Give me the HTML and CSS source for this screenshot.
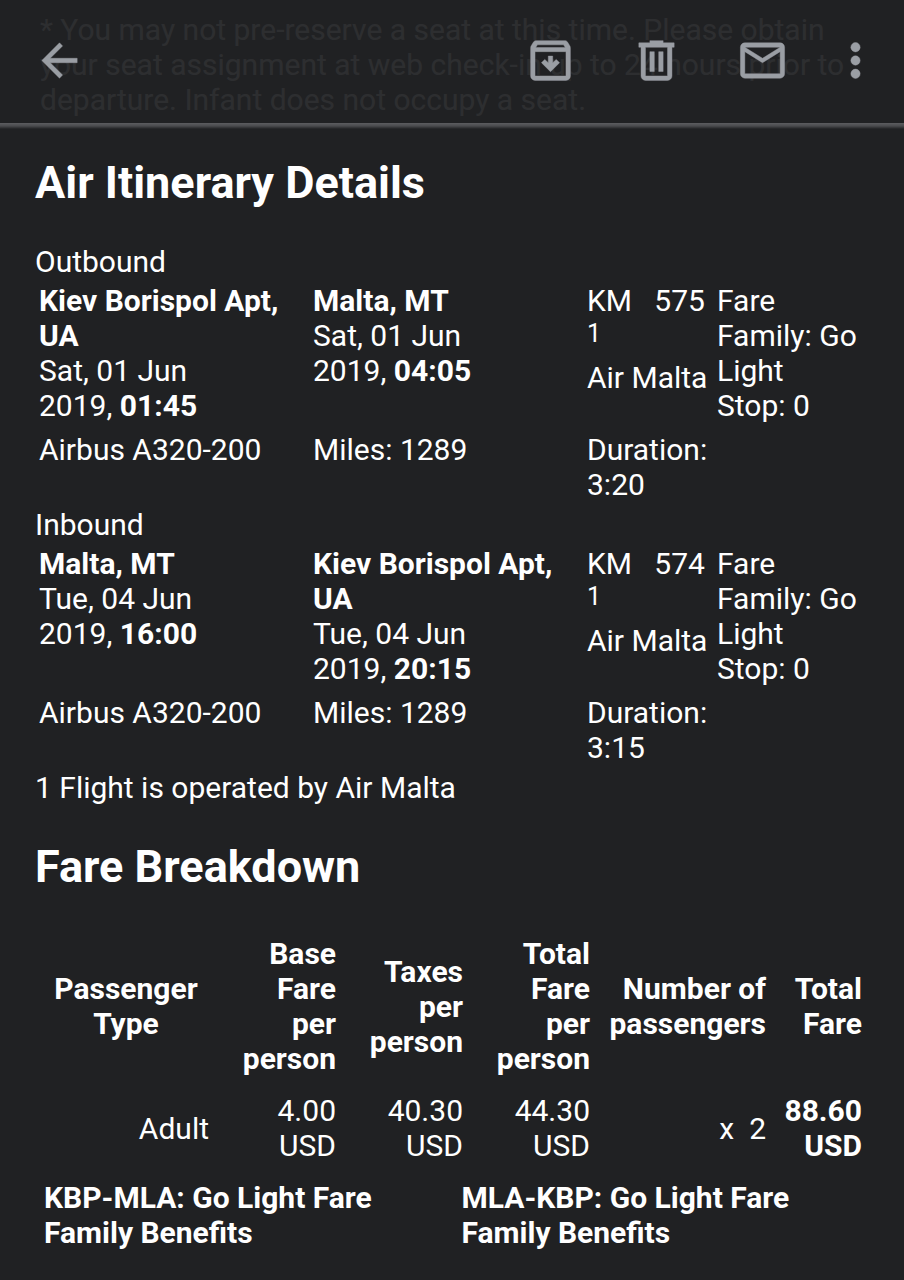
FILE: index.html
```html
<!DOCTYPE html>
<html lang="en">
<head>
    <meta charset="UTF-8">
    <meta name="viewport" content="width=device-width, initial-scale=1.0">
    <title>Air Itinerary Details</title>
    <link rel="stylesheet" href="styles.css">
</head>
<body>
    <header class="toolbar">
        <button class="icon-button" type="button" aria-label="Back">
            <svg viewBox="0 0 24 24"><path d="M20 11H7.8l5.6-5.6L12 4l-8 8 8 8 1.4-1.4L7.8 13H20z"/></svg>
        </button>
        <div class="toolbar-actions">
            <button class="icon-button" type="button" aria-label="Archive">
                <svg viewBox="0 0 24 24"><path fill-rule="evenodd" d="M5.4 3h13.2c.4 0 .8.2 1 .5l1 1.6c.3.4.4.8.4 1.3V19c0 1.1-.9 2-2 2H5c-1.1 0-2-.9-2-2V6.400c0-.5.1-.9.4-1.3l1-1.6c.2-.3.6-.5 1-.5zM6.1 4.900L5.300 6.100h13.400l-.8-1.200zM5 8v11h14V8zM11 10h2v3l1.600-1.500 1.500 1.500-4.100 4.100-4.100-4.100 1.500-1.500 1.600 1.500z"/></svg>
            </button>
            <button class="icon-button" type="button" aria-label="Delete">
                <svg viewBox="0 0 24 24"><path fill-rule="evenodd" d="M9 3h6v1h5v2h-1v13c0 1.1-.9 2-2 2H7c-1.1 0-2-.9-2-2V6H4V4h5zM7 6v13h10V6zM9 8h2v9H9zM13 8h2v9h-2z"/></svg>
            </button>
            <button class="icon-button" type="button" aria-label="Mark as unread">
                <svg viewBox="0 0 24 24"><path fill-rule="evenodd" d="M4 4h16c1.1 0 2 .9 2 2v12c0 1.1-.9 2-2 2H4c-1.1 0-2-.9-2-2V6c0-1.1.9-2 2-2zM4 8v10h16V8l-8 5zM4 6l8 5 8-5z"/></svg>
            </button>
            <button class="icon-button more" type="button" aria-label="More options">
                <svg viewBox="0 0 24 24"><circle cx="12" cy="6" r="2.1"/><circle cx="12" cy="12" r="2.1"/><circle cx="12" cy="18" r="2.1"/></svg>
            </button>
        </div>
    </header>

    <main class="message">
        <p class="seat-note">* You may not pre-reserve a seat at this time. Please obtain your seat assignment at web check-in up to 24 hours prior to departure. Infant does not occupy a seat.</p>

        <h1>Air Itinerary Details</h1>

        <p>Outbound</p>
        <table class="flight">
            <colgroup>
                <col class="col-place"><col class="col-place"><col class="col-number"><col class="col-fare">
            </colgroup>
            <tr>
                <td><b>Kiev Borispol Apt, UA</b><br>Sat, 01 Jun<br>2019, <b>01:45</b></td>
                <td><b>Malta, MT</b><br>Sat, 01 Jun<br>2019, <b>04:05</b></td>
                <td>KM&nbsp;&nbsp; 575 <sup>1</sup><br>Air Malta</td>
                <td>Fare Family: Go Light<br>Stop: 0</td>
            </tr>
            <tr>
                <td>Airbus A320-200</td>
                <td>Miles: 1289</td>
                <td>Duration: 3:20</td>
                <td></td>
            </tr>
        </table>

        <p>Inbound</p>
        <table class="flight">
            <colgroup>
                <col class="col-place"><col class="col-place"><col class="col-number"><col class="col-fare">
            </colgroup>
            <tr>
                <td><b>Malta, MT</b><br>Tue, 04 Jun<br>2019, <b>16:00</b></td>
                <td><b>Kiev Borispol Apt, UA</b><br>Tue, 04 Jun<br>2019, <b>20:15</b></td>
                <td>KM&nbsp;&nbsp; 574 <sup>1</sup><br>Air Malta</td>
                <td>Fare Family: Go Light<br>Stop: 0</td>
            </tr>
            <tr>
                <td>Airbus A320-200</td>
                <td>Miles: 1289</td>
                <td>Duration: 3:15</td>
                <td></td>
            </tr>
        </table>
        <p>1 Flight is operated by Air Malta</p>

        <h1>Fare Breakdown</h1>

        <table class="fares">
            <colgroup>
                <col class="col-type"><col class="col-amount"><col class="col-amount"><col class="col-amount"><col class="col-count"><col class="col-total">
            </colgroup>
            <tr>
                <th class="type">Passenger Type</th>
                <th class="amount">Base Fare per person</th>
                <th class="amount">Taxes per person</th>
                <th class="amount">Total Fare per person</th>
                <th>Number of passengers</th>
                <th>Total Fare</th>
            </tr>
            <tr>
                <td>Adult</td>
                <td>4.00 USD</td>
                <td>40.30 USD</td>
                <td>44.30 USD</td>
                <td>x&nbsp; 2</td>
                <td><b>88.60 USD</b></td>
            </tr>
        </table>

        <div class="benefits">
            <b>KBP-MLA: Go Light Fare Family Benefits</b>
            <b>MLA-KBP: Go Light Fare Family Benefits</b>
        </div>
    </main>
</body>
</html>
```
FILE: styles.css
```css
body {
    margin: 0;
    font-family: Roboto, "Liberation Sans", sans-serif;
    font-size: 30px;
    line-height: 35px;
    color: #fff;
    background-color: #202123;
}

.toolbar {
    position: absolute;
    top: 0;
    left: 0;
    right: 0;
    display: flex;
    justify-content: space-between;
    padding: 34px 22px 36px 33px;
    background-color: rgba(32, 33, 35, 0.94);
}

.toolbar::after {
    content: "";
    position: absolute;
    top: 100%;
    left: 0;
    right: 0;
    height: 6px;
    background: linear-gradient(#5c5d60, #4a4b4e 50%, #202123);
}

.toolbar-actions {
    display: flex;
    gap: 53px;
}

.icon-button {
    width: 53px;
    height: 53px;
    padding: 0;
    border: none;
    background: none;
    color: #9a9ea4;
    cursor: pointer;
}

.icon-button svg {
    display: block;
    width: 100%;
    height: 100%;
    fill: currentColor;
    stroke: currentColor;
    stroke-width: 0.2;
}

.icon-button.more {
    margin-left: -13px;
}

.message {
    padding: 12px 34px 28px 35px;
}

p {
    margin: 0;
}

.seat-note {
    margin-bottom: 39px;
    padding-left: 5px;
}

h1 {
    margin: 35px 0;
    font-size: 45px;
    line-height: 53px;
}

table {
    width: 100%;
    table-layout: fixed;
    border-collapse: collapse;
}

.flight td {
    padding: 4px 4px 5px;
    vertical-align: top;
}

.col-place {
    width: 274px;
}

.col-number {
    width: 130px;
}

.col-fare {
    width: 157px;
}

sup {
    font-size: 25px;
    line-height: 31px;
}

.fares th,
.fares td {
    padding: 8px 8px 9px;
    text-align: right;
}

.fares .type {
    text-align: center;
}

.fares .amount {
    padding-left: 20px;
}

.col-type {
    width: 182px;
}

.col-amount {
    width: 127px;
}

.col-count {
    width: 176px;
}

.col-total {
    width: 96px;
}

.benefits {
    display: grid;
    grid-template-columns: 1fr 1fr;
    padding-top: 8px;
}

.benefits b {
    padding: 0 40px 0 9px;
}
```
